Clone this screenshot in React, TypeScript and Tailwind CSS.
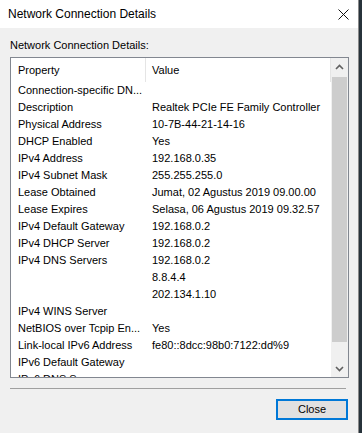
import React from "react";

const ROWS: [string, string][] = [
  ["Connection-specific DN...", ""],
  ["Description", "Realtek PCIe FE Family Controller"],
  ["Physical Address", "10-7B-44-21-14-16"],
  ["DHCP Enabled", "Yes"],
  ["IPv4 Address", "192.168.0.35"],
  ["IPv4 Subnet Mask", "255.255.255.0"],
  ["Lease Obtained", "Jumat, 02 Agustus 2019 09.00.00"],
  ["Lease Expires", "Selasa, 06 Agustus 2019 09.32.57"],
  ["IPv4 Default Gateway", "192.168.0.2"],
  ["IPv4 DHCP Server", "192.168.0.2"],
  ["IPv4 DNS Servers", "192.168.0.2"],
  ["", "8.8.4.4"],
  ["", "202.134.1.10"],
  ["IPv4 WINS Server", ""],
  ["NetBIOS over Tcpip En...", "Yes"],
  ["Link-local IPv6 Address", "fe80::8dcc:98b0:7122:dd%9"],
  ["IPv6 Default Gateway", ""],
  ["IPv6 DNS Servers", ""],
];

function Chevron({ up }: { up?: boolean }) {
  return (
    <svg width="9" height="6" viewBox="0 0 9 6" aria-hidden>
      <path
        d={up ? "M1 5 L4.5 1.5 L8 5" : "M1 1 L4.5 4.5 L8 1"}
        fill="none"
        stroke="#606060"
        strokeWidth="1.6"
      />
    </svg>
  );
}

export default function App() {
  return (
    <div
      className="flex h-[433px] w-[362px] overflow-hidden text-black"
      style={{ fontFamily: '"Liberation Sans", Arial, sans-serif' }}
    >
      <div className="flex w-[359px] flex-col border-r border-[#8a8a8a] bg-[#f0f0f0]">
        {/* title bar */}
        <div className="flex h-[28px] items-center justify-between bg-white pl-[8px] pr-[9px]">
          <span className="text-[12px] leading-none">Network Connection Details</span>
          <svg width="11" height="11" viewBox="0 0 11 11" aria-hidden>
            <path d="M0.5 0.5 L10.5 10.5 M10.5 0.5 L0.5 10.5" stroke="#111" strokeWidth="1" />
          </svg>
        </div>

        <div className="flex flex-col px-[10px]">
          <p className="mt-[11px] h-[13px] text-[11px] leading-[13px]">Network Connection Details:</p>

          {/* list view */}
          <div className="mt-[5px] flex h-[321px] w-[339px] border border-[#828790] bg-white">
            <div className="flex min-w-0 flex-1 flex-col overflow-hidden">
              <div className="flex h-[24px] shrink-0 items-center text-[11px]">
                <div className="flex h-full w-[135px] items-center border-r border-[#e5e5e5] pl-[7px]">
                  Property
                </div>
                <div className="flex h-full flex-1 items-center border-r border-[#e5e5e5] pl-[6px]">
                  Value
                </div>
              </div>
              {ROWS.map(([k, v], i) => (
                <div key={i} className="flex h-[17px] shrink-0 items-center text-[11px] leading-[17px]">
                  <div className="w-[135px] whitespace-nowrap pl-[7px]">{k}</div>
                  <div className="flex-1 whitespace-nowrap pl-[6px]">{v}</div>
                </div>
              ))}
            </div>

            {/* scrollbar */}
            <div className="flex w-[17px] shrink-0 flex-col bg-[#f0f0f0]">
              <div className="flex h-[17px] items-center justify-center">
                <Chevron up />
              </div>
              <div className="mx-[1px] mt-[2px] h-[265px] bg-[#cdcdcd]" />
              <div className="flex-1" />
              <div className="flex h-[17px] items-center justify-center">
                <Chevron />
              </div>
            </div>
          </div>

          <div className="mt-[10px] h-[1px] w-[336px] bg-[#a0a0a0]" />

          <div className="mt-[10px] flex justify-end">
            <button
              type="button"
              className="h-[21px] w-[72px] border-2 border-[#0078d7] bg-[#e1e1e1] text-[11px] leading-none"
            >
              Close
            </button>
          </div>
        </div>
      </div>
      <div className="flex-1 bg-[#27323a]" />
    </div>
  );
}
